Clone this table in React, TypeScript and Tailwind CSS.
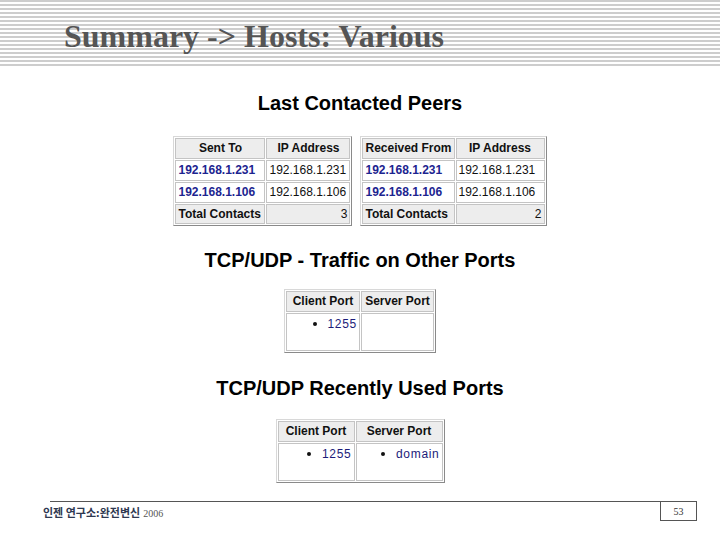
const arial = "font-['Liberation_Sans',Arial,sans-serif]"

const cell = "border border-[#c4c4c4] px-[2px] text-[12px] leading-[15px] whitespace-nowrap"

function Th({ children, w }: { children: React.ReactNode; w: string }) {
  return (
    <th className={`${w} ${cell} h-[21px] bg-[#ededed] text-center font-bold text-[#111]`}>
      {children}
    </th>
  )
}

function PeerTable({ first, total, rows, w1, w2 }: { first: string; total: number; rows: string[]; w1: string; w2: string }) {
  return (
    <table className="border-separate border-spacing-[1px] border border-t-[#d8d8d8] border-l-[#d8d8d8] border-r-[#8a8a8a] border-b-[#8a8a8a]">
      <thead>
        <tr>
          <Th w={w1}>{first}</Th>
          <Th w={w2}>IP Address</Th>
        </tr>
      </thead>
      <tbody>
        {rows.map((ip) => (
          <tr key={ip}>
            <td className={`${cell} h-[21px] bg-white text-left font-bold text-[#1c2490]`}>{ip}</td>
            <td className={`${cell} h-[21px] bg-white text-left text-[#111]`}>{ip}</td>
          </tr>
        ))}
        <tr>
          <td className={`${cell} h-[20px] bg-[#ededed] text-left font-bold text-[#111]`}>Total Contacts</td>
          <td className={`${cell} h-[20px] bg-[#ededed] text-right text-[#111]`}>{total}</td>
        </tr>
      </tbody>
    </table>
  )
}

function PortList({ items }: { items: string[] }) {
  return (
    <ul className="mb-[18px]">
      {items.map((p) => (
        <li key={p} className="flex items-center justify-end gap-[11px]">
          <span className="h-[4px] w-[4px] rounded-full bg-[#111]" />
          <span className="text-[12px] leading-[16px] tracking-[0.7px] text-[#1c1c7a]">{p}</span>
        </li>
      ))}
    </ul>
  )
}

function PortTable({ client, server, cw, sw }: { client: string[]; server: string[]; cw: string; sw: string }) {
  return (
    <table className="border-separate border-spacing-[1px] border border-t-[#d8d8d8] border-l-[#d8d8d8] border-r-[#8a8a8a] border-b-[#8a8a8a]">
      <thead>
        <tr>
          <Th w={cw}>Client Port</Th>
          <Th w={sw}>Server Port</Th>
        </tr>
      </thead>
      <tbody>
        <tr>
          <td className="h-[38px] border border-[#c4c4c4] bg-white pt-[2px] pr-[2px] align-top">
            {client.length > 0 && <PortList items={client} />}
          </td>
          <td className="h-[38px] border border-[#c4c4c4] bg-white pt-[2px] pr-[2px] align-top">
            {server.length > 0 && <PortList items={server} />}
          </td>
        </tr>
      </tbody>
    </table>
  )
}

export default function App() {
  return (
    <div className="relative h-[540px] w-[720px] overflow-hidden bg-white">
      <div className="h-[66px] bg-[repeating-linear-gradient(to_bottom,#cdcdcd_0px,#cdcdcd_2px,#ffffff_2px,#ffffff_4px)] pl-[64px] pt-[17px]">
        <h1 className="font-['Liberation_Serif','Times_New_Roman',serif] text-[32px] font-bold leading-[38px] text-[#555555]">
          Summary -&gt; Hosts: Various
        </h1>
      </div>

      <div className={`flex flex-col items-center ${arial}`}>
        <h2 className="mt-[25px] text-[20px] font-bold leading-[24px] text-black">Last Contacted Peers</h2>
        <div className="mt-[21px] flex gap-[8px]">
          <PeerTable first="Sent To" total={3} rows={["192.168.1.231", "192.168.1.106"]} w1="w-[90px]" w2="w-[84px]" />
          <PeerTable first="Received From" total={2} rows={["192.168.1.231", "192.168.1.106"]} w1="w-[91px]" w2="w-[89px]" />
        </div>

        <h2 className="mt-[22px] text-[20px] font-bold leading-[24px] text-black">TCP/UDP - Traffic on Other Ports</h2>
        <div className="mt-[17px]">
          <PortTable client={["1255"]} server={[]} cw="w-[74px]" sw="w-[73px]" />
        </div>

        <h2 className="mt-[23px] text-[20px] font-bold leading-[24px] text-black">TCP/UDP Recently Used Ports</h2>
        <div className="mt-[19px]">
          <PortTable client={["1255"]} server={["domain"]} cw="w-[77px]" sw="w-[87px]" />
        </div>
      </div>

      <div className="absolute left-0 top-[501px] flex w-full items-start">
        <div className="ml-[50px] h-[1px] flex-1 bg-[#555555]" />
        <div className="mr-[23px] flex h-[20px] w-[37px] items-center justify-center border border-[#555555] font-['Liberation_Serif',serif] text-[10px] text-[#333]">
          53
        </div>
      </div>
      <div className="absolute left-[43px] top-[505px] flex items-baseline gap-[3px]">
        <span className="font-['Noto_Sans_CJK_KR',sans-serif] text-[11px] font-bold leading-[14px] text-[#2e3850]">
          인젠 연구소:완전변신
        </span>
        <span className="font-['Liberation_Serif',serif] text-[10px] text-[#555]">2006</span>
      </div>
    </div>
  )
}
